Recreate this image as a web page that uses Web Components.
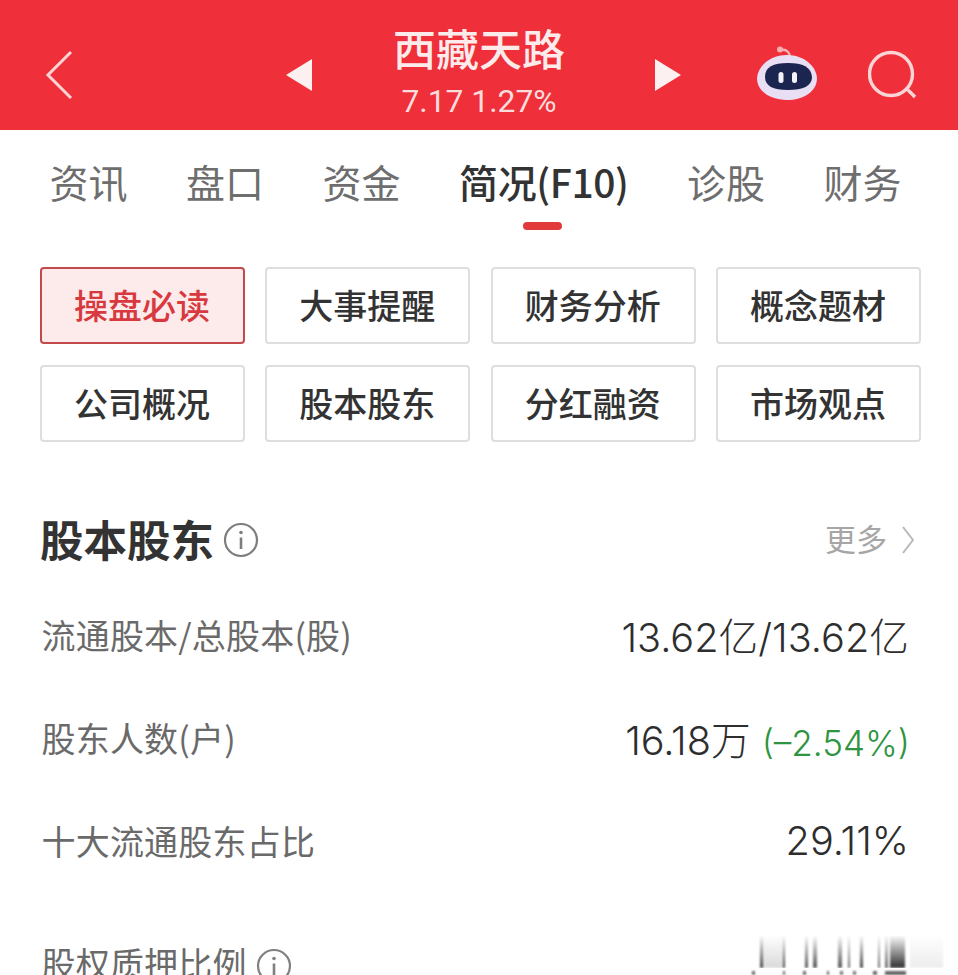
<!DOCTYPE html>
<html lang="zh-CN">
<head>
<meta charset="utf-8">
<title>西藏天路</title>
<style>
    html, body {
        margin: 0;
        height: 975px;
        overflow: hidden;
        background: #fff;
        font-family: "Noto Sans CJK SC", "Noto Sans", sans-serif;
    }
</style>
</head>
<body>
<stock-header name="西藏天路" quote="7.17 1.27%"></stock-header>
<tab-bar>
    <tab-item>资讯</tab-item>
    <tab-item>盘口</tab-item>
    <tab-item>资金</tab-item>
    <tab-item active>简况(F10)</tab-item>
    <tab-item>诊股</tab-item>
    <tab-item>财务</tab-item>
</tab-bar>
<shortcut-grid>
    <shortcut-button active>操盘必读</shortcut-button>
    <shortcut-button>大事提醒</shortcut-button>
    <shortcut-button>财务分析</shortcut-button>
    <shortcut-button>概念题材</shortcut-button>
    <shortcut-button>公司概况</shortcut-button>
    <shortcut-button>股本股东</shortcut-button>
    <shortcut-button>分红融资</shortcut-button>
    <shortcut-button>市场观点</shortcut-button>
</shortcut-grid>
<section-head title="股本股东"></section-head>
<data-row label="流通股本/总股本(股)"><span>13.62亿/13.62亿</span></data-row>
<data-row label="股东人数(户)" change="(–2.54%)"><span>16.18万</span></data-row>
<data-row label="十大流通股东占比"><span>29.11%</span></data-row>
<data-row label="股权质押比例" info smeared></data-row>

<script>
const INFO_ICON = `
    <svg viewBox="0 0 36 36" fill="none" stroke="currentColor">
        <circle cx="18" cy="18" r="16" stroke-width="2.2"/>
        <circle cx="18" cy="10.5" r="1.8" fill="currentColor" stroke="none"/>
        <path d="M18 15.5V27" stroke-width="2.6"/>
    </svg>`;

class StockHeader extends HTMLElement {
    connectedCallback() {
        this.attachShadow({ mode: 'open' });
        this.shadowRoot.innerHTML = `
            <style>
                :host {
                    display: flex;
                    align-items: center;
                    height: 130px;
                    background: #ef2f3a;
                    color: #fff;
                    box-sizing: border-box;
                    padding: 20px 0 0 45px;
                }
                svg { display: block; flex-shrink: 0; }
                .back { width: 28px; height: 50px; }
                .prev, .next { width: 26px; height: 32px; }
                .prev { margin-left: 213px; }
                .next { margin-left: 9px; }
                .title {
                    width: 334px;
                    text-align: center;
                    margin-top: -10px;
                }
                .name {
                    font-size: 43px;
                    font-weight: 500;
                    line-height: 50px;
                    color: #fdeaea;
                }
                .quote {
                    font-family: Roboto, "Liberation Sans", sans-serif;
                    font-size: 31.8px;
                    line-height: 36px;
                    margin-top: 11px;
                    color: #fbdcdc;
                }
                .robot { width: 60px; height: 58px; margin-left: 76px; }
                .search { width: 52px; height: 52px; margin-left: 51px; }
            </style>
            <svg class="back" viewBox="0 0 28 50" fill="none" stroke="#fbd5d5" stroke-width="3">
                <path d="M26 2 L3 25 L26 48"/>
            </svg>
            <svg class="prev" viewBox="0 0 26 32"><path d="M0 16 L26 0 V32 Z" fill="#fdf0f0"/></svg>
            <div class="title">
                <div class="name">${this.getAttribute('name')}</div>
                <div class="quote">${this.getAttribute('quote')}</div>
            </div>
            <svg class="next" viewBox="0 0 26 32"><path d="M0 0 L26 16 L0 32 Z" fill="#fdf0f0"/></svg>
            <svg class="robot" viewBox="0 0 60 58">
                <path d="M24 4 C28 3 32 5 33 10" fill="none" stroke="#f6b0b4" stroke-width="2.5"/>
                <circle cx="23" cy="3.5" r="3" fill="#f6b0b4"/>
                <path d="M30 9 C47 9 59 20 60 32 C60 46 46 54 30 54 C14 54 0 46 0 32 C1 20 13 9 30 9 Z" fill="#e9dff5"/>
                <path d="M31 17 C46 17 54 21 55 31 C55 40 46 44 31 44 C16 44 8 40 8 31 C8 21 16 17 31 17 Z" fill="#1c2550"/>
                <rect x="21.5" y="26" width="5" height="11" rx="2.5" fill="#f2f2f7"/>
                <rect x="35" y="26" width="5" height="11" rx="2.5" fill="#f2f2f7"/>
            </svg>
            <svg class="search" viewBox="0 0 52 52" fill="none" stroke="#fbd5d5" stroke-width="3.4">
                <circle cx="23" cy="25" r="21.5"/>
                <path d="M38 39 L47 48"/>
            </svg>
        `;
    }
}

class TabBar extends HTMLElement {
    connectedCallback() {
        this.attachShadow({ mode: 'open' });
        this.shadowRoot.innerHTML = `
            <style>
                :host {
                    display: flex;
                    gap: 58.5px;
                    height: 102px;
                    padding: 0 0 0 49.5px;
                    box-sizing: border-box;
                }
            </style>
            <slot></slot>
        `;
    }
}

class TabItem extends HTMLElement {
    connectedCallback() {
        this.attachShadow({ mode: 'open' });
        this.shadowRoot.innerHTML = `
            <style>
                :host {
                    display: flex;
                    flex-direction: column;
                    align-items: center;
                    font-size: 39px;
                    line-height: 50px;
                    padding-top: 26px;
                    color: #6e6e6e;
                }
                :host([active]) {
                    color: #333;
                    font-weight: 500;
                    letter-spacing: -0.4px;
                }
                .bar {
                    display: none;
                    width: 39px;
                    height: 8px;
                    margin: 16px 3px 0 0;
                    border-radius: 4px;
                    background: #e23a3a;
                }
                :host([active]) .bar { display: block; }
            </style>
            <span><slot></slot></span>
            <div class="bar"></div>
        `;
    }
}

class ShortcutGrid extends HTMLElement {
    connectedCallback() {
        this.attachShadow({ mode: 'open' });
        this.shadowRoot.innerHTML = `
            <style>
                :host {
                    display: grid;
                    grid-template-columns: repeat(4, 205px);
                    column-gap: 20.33px;
                    row-gap: 21px;
                    padding: 35px 0 0 40px;
                }
            </style>
            <slot></slot>
        `;
    }
}

class ShortcutButton extends HTMLElement {
    connectedCallback() {
        this.attachShadow({ mode: 'open' });
        this.shadowRoot.innerHTML = `
            <style>
                :host {
                    display: flex;
                    align-items: center;
                    justify-content: center;
                    height: 77px;
                    box-sizing: border-box;
                    padding: 0 1px 3px 0;
                    border: 2px solid #dedede;
                    border-radius: 4px;
                    background: #fff;
                    color: #333;
                    font-size: 34px;
                    font-weight: 500;
                }
                :host([active]) {
                    border-color: #c24a4c;
                    background: #fdeaea;
                    color: #d8393f;
                }
            </style>
            <slot></slot>
        `;
    }
}

class SectionHead extends HTMLElement {
    connectedCallback() {
        this.attachShadow({ mode: 'open' });
        this.shadowRoot.innerHTML = `
            <style>
                :host {
                    display: flex;
                    align-items: center;
                    height: 60px;
                    margin: 68px 0 13px;
                    padding: 0 44px 0 40px;
                }
                .title {
                    font-size: 43.5px;
                    font-weight: 700;
                    color: #333;
                    padding-bottom: 4px;
                }
                .info { width: 36px; height: 36px; margin-left: 9px; color: #7d7d7d; }
                .more {
                    margin-left: auto;
                    padding-bottom: 6px;
                    font-size: 31px;
                    color: #a6a6a6;
                }
                .chevron { width: 12px; height: 30px; margin-left: 15px; }
            </style>
            <span class="title">${this.getAttribute('title')}</span>
            <span class="info">${INFO_ICON}</span>
            <span class="more">更多</span>
            <svg class="chevron" viewBox="0 0 12 30" fill="none" stroke="#b8b8b8" stroke-width="2">
                <path d="M1 2 L11 15 L1 28"/>
            </svg>
        `;
    }
}

class DataRow extends HTMLElement {
    connectedCallback() {
        const change = this.getAttribute('change');
        this.attachShadow({ mode: 'open' });
        this.shadowRoot.innerHTML = `
            <style>
                :host {
                    display: flex;
                    align-items: center;
                    height: 103px;
                    padding: 0 49px 0 41.5px;
                    color: #333;
                }
                :host([smeared]) {
                    position: relative;
                    margin-top: 19px;
                }
                .label {
                    display: flex;
                    align-items: center;
                    font-size: 34px;
                    letter-spacing: 0.2px;
                    color: #6a6a6a;
                }
                .info { width: 36px; height: 36px; margin-left: 9px; color: #808080; }
                .value {
                    margin-left: auto;
                    font-family: Inter, "Noto Sans CJK SC", sans-serif;
                    font-size: 39.7px;
                    font-weight: 300;
                    color: #2e2e2e;
                }
                .change {
                    margin: 10px -1px 0 11px;
                    font-family: Inter, "Noto Sans CJK SC", sans-serif;
                    font-size: 35px;
                    font-weight: 300;
                    color: #2f9440;
                }
                /* smeared figures at the bottom edge of the screen */
                .smear {
                    position: absolute;
                    left: 740px;
                    top: 24px;
                    width: 218px;
                    height: 33px;
                    filter: blur(0.8px);
                    background: linear-gradient(90deg,
                        #fff 0 20px, #555 20px 23px, #ddd 23px 43px, #555 43px 45px, #fff 45px 65px,
                        #666 65px 68px, #fff 68px 73px, #666 73px 77px, #fff 77px 98px,
                        #666 98px 102px, #fff 102px 108px, #777 108px 110px, #fff 110px 120px,
                        #555 120px 123px, #fff 123px 138px, #777 138px 140px, #fff 140px 145px,
                        #777 145px 148px, #fff 148px 150px, #444 150px 165px, #fff 165px 170px,
                        #eee 170px 203px, #fff 203px);
                    -webkit-mask-image: linear-gradient(transparent, #000 90%);
                    mask-image: linear-gradient(transparent, #000 90%);
                }
                .crumbs {
                    position: absolute;
                    left: 740px;
                    top: 60px;
                    width: 218px;
                    height: 4px;
                    filter: blur(0.8px);
                    background: linear-gradient(90deg,
                        #fff 0 12px, #666 12px 15px, #fff 15px 43px, #666 43px 45px, #fff 45px 63px,
                        #666 63px 66px, #fff 66px 87px, #666 87px 89px, #fff 89px 100px,
                        #777 100px 103px, #fff 103px 113px, #777 113px 116px, #fff 116px 133px,
                        #666 133px 137px, #fff 137px 145px, #666 145px 166px, #fff 166px);
                }
            </style>
            <span class="label">${this.getAttribute('label')}${this.hasAttribute('info') ? `<span class="info">${INFO_ICON}</span>` : ''}</span>
            <span class="value"><slot></slot></span>
            ${change ? `<span class="change">${change}</span>` : ''}
            ${this.hasAttribute('smeared') ? '<div class="smear"></div><div class="crumbs"></div>' : ''}
        `;
    }
}

customElements.define('stock-header', StockHeader);
customElements.define('tab-bar', TabBar);
customElements.define('tab-item', TabItem);
customElements.define('shortcut-grid', ShortcutGrid);
customElements.define('shortcut-button', ShortcutButton);
customElements.define('section-head', SectionHead);
customElements.define('data-row', DataRow);
</script>
</body>
</html>
